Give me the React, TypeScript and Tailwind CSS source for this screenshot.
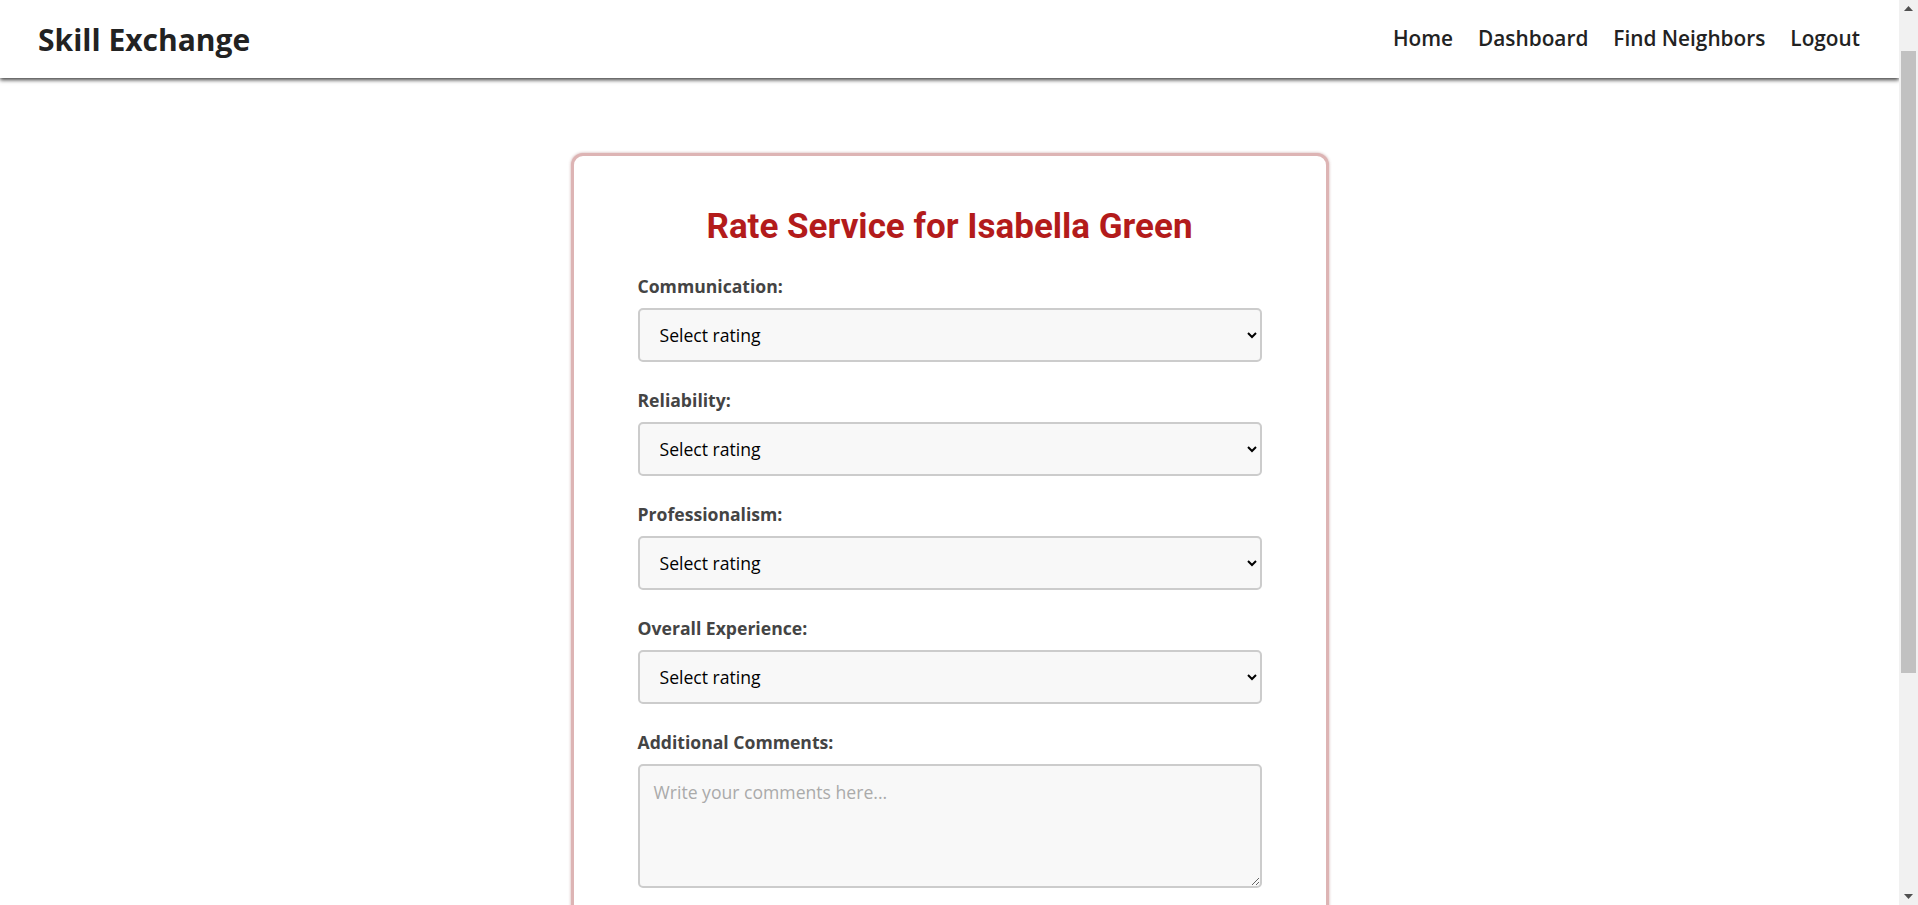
import React from 'react';

const FIELDS = ['Communication:', 'Reliability:', 'Professionalism:', 'Overall Experience:'];

// imitation of the browser's classic scrollbar shown in the screenshot
function FakeScrollbar() {
  return (
    <div className="fixed top-0 right-0 h-screen w-[19px] bg-[#f1f1f1] flex flex-col items-center z-20">
      <div className="h-[17px] w-full flex items-center justify-center">
        <svg width="9" height="5" viewBox="0 0 9 5"><path d="M4.5 0L9 5H0z" fill="#505050" /></svg>
      </div>
      <div className="mt-[34px] h-[622px] w-[15px] bg-[#c1c1c1]" />
      <div className="flex-1" />
      <div className="h-[17px] w-full flex items-center justify-center">
        <svg width="9" height="5" viewBox="0 0 9 5"><path d="M0 0H9L4.5 5z" fill="#505050" /></svg>
      </div>
    </div>
  );
}

export default function App() {
  return (
    <div className="min-h-[1268px] bg-white text-[#222]" style={{ fontFamily: '"Open Sans", "Liberation Sans", sans-serif' }}>
      <FakeScrollbar />
      <div className="mr-[19px]">
        {/* Header */}
        <header className="h-[78px] bg-white flex items-center justify-between pl-[38px] pr-[39px] shadow-[0_2px_4px_rgba(0,0,0,0.75)] relative z-10">
          <h1 className="text-[30px] font-bold text-[#222]">Skill Exchange</h1>
          <nav className="flex items-center gap-[25px] text-[20.8px] font-semibold text-[#222]">
            <a href="#">Home</a>
            <a href="#">Dashboard</a>
            <a href="#">Find Neighbors</a>
            <a href="#">Logout</a>
          </nav>
        </header>

        {/* Main */}
        <main className="flex justify-center pt-[75px] pb-16">
          <div className="w-[758px] bg-white rounded-[12px] border-[3px] border-[#ddb4b4] shadow-[0_0_3px_rgba(140,60,60,0.45)] px-[64px] pt-[50px] pb-[50px]">
            <h2
              className="text-[35px] leading-[42px] font-bold text-[#b31b1b] text-center mb-[26px]"
              style={{ fontFamily: 'Roboto, "Liberation Sans", sans-serif' }}
            >
              Rate Service for Isabella Green
            </h2>

            <form className="flex flex-col">
              {FIELDS.map(label => (
                <div key={label} className="flex flex-col mb-[26px]">
                  <label className="text-[17.6px] leading-[24px] font-bold text-[#444] mb-[10px]">{label}</label>
                  <select className="h-[54px] w-full rounded-[5px] border-2 border-[#ccc] bg-[#f8f8f8] pl-[16px] pr-[8px] text-[17.6px] text-black">
                    <option>Select rating</option>
                    <option>1 - Poor</option>
                    <option>2 - Fair</option>
                    <option>3 - Good</option>
                    <option>4 - Very Good</option>
                    <option>5 - Excellent</option>
                  </select>
                </div>
              ))}

              <div className="flex flex-col mb-[26px]">
                <label className="text-[17.6px] leading-[24px] font-bold text-[#444] mb-[10px]">Additional Comments:</label>
                <textarea
                  placeholder="Write your comments here..."
                  className="h-[124px] w-full rounded-[5px] border-2 border-[#ccc] bg-[#f8f8f8] px-[14px] pt-[13px] text-[17.6px] leading-[26px] placeholder:text-[#aaa]"
                />
              </div>

              <button type="button" className="mt-2 h-[52px] w-full rounded-[5px] bg-[#b31b1b] text-white text-[18px] font-bold">
                Submit Rating
              </button>
            </form>
          </div>
        </main>
      </div>
    </div>
  );
}
